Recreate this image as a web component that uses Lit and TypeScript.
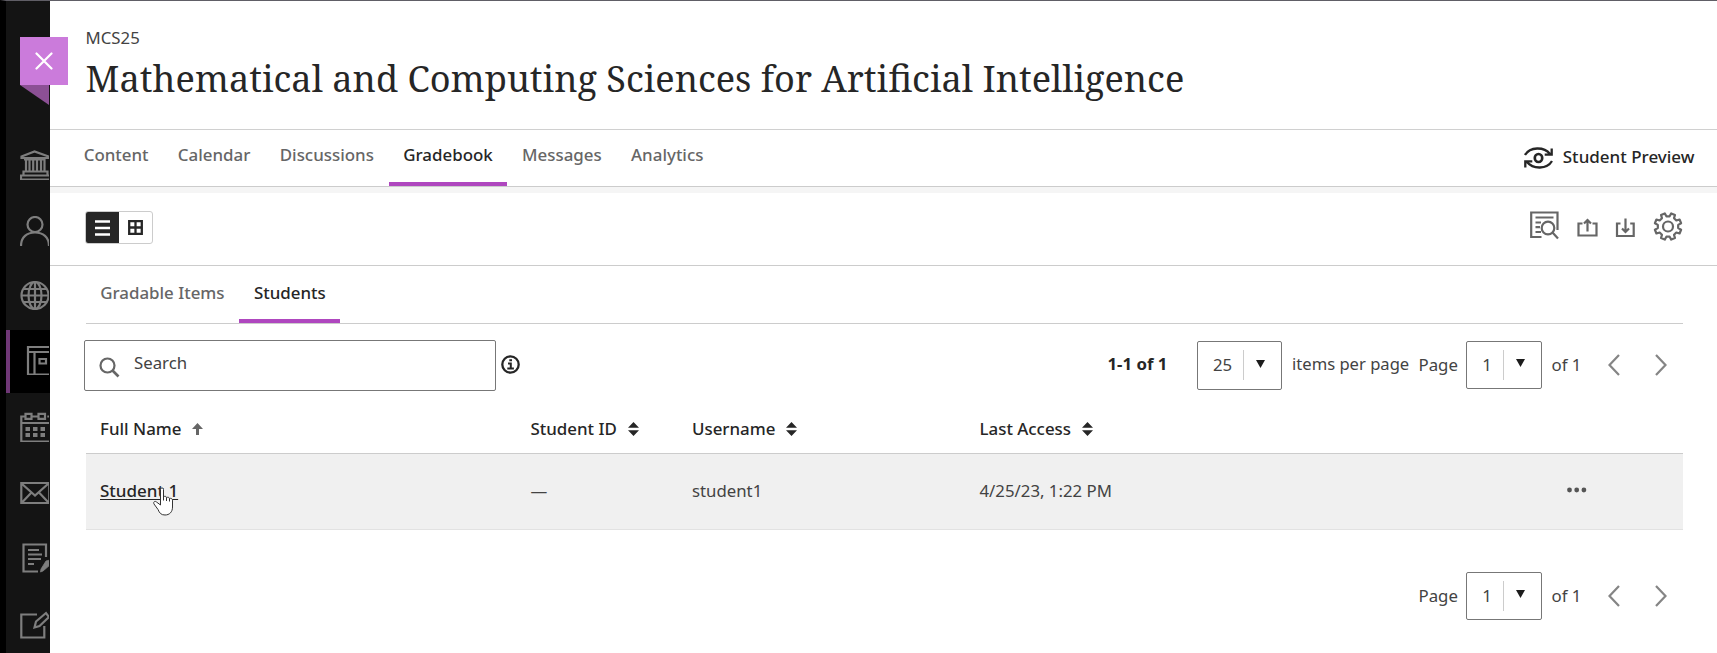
import { LitElement, html, css, svg } from "lit";
import { customElement, property } from "lit/decorators.js";

const railIcons = {
  institution: svg`<path d="M1.500 6.500 14.500 1.500 28.500 6.500V8H1.500zM6 9v12M9.500 9v12M13.200 9v12M17 9v12M21 9v12M24.500 9v12M4 9.500h21M3.500 25v-3.500h24V25M1 29.500v-4H30v4z"/>`,
  profile: svg`<circle cx="15" cy="8.500" r="7.500"/><path d="M1 30C1 21 7 16.500 15 16.500S29 21 29 30"/>`,
  globe: svg`<circle cx="15" cy="15.500" r="13.500"/><ellipse cx="15" cy="15.500" rx="6.500" ry="13.500"/><path d="M15 2v27M1.500 15.500h27M4 9h22M4 22h22"/>`,
  courses: svg`<path d="M8 2h30v27.500H8zM8 7h30M14.500 7v22M19.500 14h6.500v4.500h-6.500z"/>`,
  calendar: svg`<path d="M5.500 4.500H1.300v25h29V4.500h-3M11.500 4.500h7M1 11h28M5.500 1.800h6v5h-6zM18.500 1.800h6.500v5h-6.500z"/><path d="M5.500 17h4.500M13 17h4.500M20.500 17h4.500M5.500 23h4.500M13 23h4.500M20.500 23h4.500" stroke-width="4"/>`,
  mail: svg`<path d="M1.300 5h28v20H1.300zM1.500 5.500l13.500 12 13.500-12M2 24.500l9.500-10M28.500 24.500l-9.500-10"/>`,
  grades: svg`<path d="M26 14V1.500H3.500v27h14.500"/><path d="M8 7h11M8 11.500h14M8 16h13M8 21h6"/><path d="M26 18l4-1v5l-7 6-2.500 1 .5-3z" fill="currentColor" stroke-width=".8"/>`,
  compose: svg`<path d="M17 5.500H1.300v23h23V17M14.500 18.500l1.500-6L26 4l3 4-9.500 9z"/>`,
} as const;

/** Outline of a cog with evenly spaced teeth, none of them pointing straight up. */
const cogPath = (cx: number, cy: number, teeth: number, outer: number, inner: number) => {
  const step = (Math.PI * 2) / teeth;
  const at = (r: number, a: number) => `${(cx + r * Math.sin(a)).toFixed(2)} ${(cy - r * Math.cos(a)).toFixed(2)}`;
  const points: string[] = [];
  for (let i = 0; i < teeth; i++) {
    const a = (i + 0.5) * step;
    points.push(at(inner, a - step * 0.3), at(outer, a - step * 0.19), at(outer, a + step * 0.19), at(inner, a + step * 0.3));
  }
  return `M${points.join("L")}Z`;
};

@customElement("rail-icon")
class RailIcon extends LitElement {
  @property() name: keyof typeof railIcons = "globe";
  static styles = css`
    :host { display: block; width: 29px; height: 30px; overflow: hidden; color: #7e7e7e; }
    .glyph { display: block; width: 30px; height: 30px; fill: none; stroke: currentColor; stroke-width: 2.200; overflow: hidden; }
  `;
  render() {
    return html`<svg class="glyph" viewBox="0 0 30 30">${railIcons[this.name]}</svg>`;
  }
}

@customElement("sort-icon")
class SortIcon extends LitElement {
  static styles = css`
    :host { display: block; width: 11px; height: 14px; }
    .glyph { display: block; fill: #262626; }
  `;
  render() {
    return html`<svg class="glyph" width="11" height="14" viewBox="0 0 11 14"><path d="M5.500 0 11 5.700H0zM0 8.300h11L5.500 14z"/></svg>`;
  }
}

@customElement("page-select")
class PageSelect extends LitElement {
  @property() value = "1";
  static styles = css`
    :host { display: flex; box-sizing: border-box; width: 76px; height: 48px; border: 1px solid #777; border-radius: 2px; background: #fff; }
    :host([wide]) { width: 85px; height: 49px; }
    .value { flex: 1; text-align: center; line-height: 46px; padding-left: 4px; }
    :host([wide]) .value { padding-left: 5px; }
    .divider { width: 1px; height: 30px; margin-top: 8px; background: #ccc; }
    .arrow { width: 37px; padding-top: 17px; box-sizing: border-box; }
    .glyph { display: block; margin-left: 12px; fill: #1c1c1c; }
    :host([wide]) .arrow { padding-top: 18px; }
  `;
  render() {
    return html`<span class="value">${this.value}</span><span class="divider"></span>
      <span class="arrow"><svg class="glyph" width="9" height="8" viewBox="0 0 9 8"><path d="M0 0h9L4.500 8z"/></svg></span>`;
  }
}

@customElement("page-nav")
class PageNav extends LitElement {
  static styles = css`
    :host { display: flex; align-items: center; height: 48px; line-height: 46px; }
    .label { width: 47.500px; }
    .total { width: 65.500px; padding-left: 9.500px; box-sizing: border-box; }
    .glyph { display: block; fill: none; stroke: #858585; stroke-width: 2.200; }
    .next { margin-left: 35px; }
  `;
  render() {
    return html`<span class="label">Page</span><page-select></page-select><span class="total">of 1</span>
      <svg class="glyph" width="12" height="22" viewBox="0 0 12 22"><path d="M11 1 1.500 11 11 21"/></svg>
      <svg class="glyph next" width="12" height="22" viewBox="0 0 12 22"><path d="M1 1l9.500 10L1 21"/></svg>`;
  }
}

@customElement("app-root")
class AppRoot extends LitElement {
  static styles = css`
    :host { display: block; position: relative; width: 1717px; height: 653px; overflow: hidden; background: #fff; font-family: "Noto Sans", "Open Sans", sans-serif; font-size: 16.800px; color: #434343; }
    * { box-sizing: border-box; }
    .shell { display: flex; height: 653px; border-top: 1px solid #605e66; border-left: 6px solid #000; }
    .rail { width: 43.500px; height: 652px; background: #141414; padding-top: 134px; flex: none; overflow: hidden; }
    .rail-item { height: 65.700px; padding: 15px 0 0 14px; }
    .rail-item.globe { height: 65px; }
    .rail-item.profile { height: 64.300px; }
    .rail-item.courses { height: 63px; background: #000; border-left: 4.500px solid #6f3776; padding: 15.500px 0 0 9.500px; margin-bottom: 4px; }
    .ribbon { position: absolute; left: 20px; top: 37px; width: 48.300px; height: 48px; background: #cb7bdb; }
    .ribbon-fold { position: absolute; left: 20px; top: 85px; }
    .cross { display: block; margin: 15px 0 0 15px; }
    .main { flex: 1; }
    .header { height: 129px; padding: 24px 0 0 36px; border-bottom: 1px solid #d0d0d0; }
    .code { line-height: 26px; height: 26px; }
    .title { margin: 0; padding-top: 2px; font: 400 36.150px/50px "Noto Serif", "DejaVu Serif", serif; color: #262626; white-space: nowrap; }
    .nav { display: flex; height: 57px; border-bottom: 1px solid #ccc; box-shadow: 0 6px 0 #f5f5f5; padding-left: 19.500px; font-weight: 500; font-size: 16.920px; color: #666; }
    .nav-tab { padding: 0 14.650px; line-height: 49px; height: 56px; white-space: nowrap; }
    .nav-tab.active { border-bottom: 4px solid #af47bf; color: #262626; }
    .preview { display: flex; margin-left: auto; padding-right: 22.500px; color: #262626; line-height: 54px; font-size: 17px; }
    .preview-icon { margin: 16px 10px 0 0; }
    .toolbar { display: flex; height: 79px; padding: 23px 34px 0 35.500px; border-bottom: 1px solid #ccc; }
    .toggle { display: flex; width: 68px; height: 33px; margin-top: 1px; border: 1px solid #ccc; border-radius: 3px; overflow: hidden; }
    .view { display: grid; place-items: center; width: 33px; }
    .view.on { background: #262626; }
    .actions { margin-left: auto; display: flex; }
    .content { padding: 0 34px 0 36px; }
    .subtabs { display: flex; height: 58px; border-bottom: 1px solid #ccc; font-weight: 500; font-size: 16.900px; color: #666; }
    .subtab { padding: 0 14.700px; line-height: 54px; height: 57px; }
    .subtab.active { border-bottom: 4.500px solid #af47bf; color: #262626; }
    .filters { display: flex; height: 84px; }
    .search { display: flex; width: 412px; height: 51px; margin: 16px 0 0 -1.500px; border: 1px solid #777; border-radius: 2px; line-height: 44px; }
    .search-icon { margin: 15.500px 14px 0 14px; }
    .info { margin: 31px 0 0 5px; }
    .pager { display: flex; align-items: flex-start; margin: 16.500px 16.500px 0 auto; line-height: 46px; }
    .range { font-weight: 700; color: #262626; width: 89px; }
    .per-page { padding-left: 10.500px; width: 137px; font-size: 16.600px; }
    .row { display: grid; grid-template-columns: 430.500px 161.500px 287.500px 587.500px auto; padding-left: 14.500px; align-items: center; }
    .head { height: 46px; padding-bottom: 4px; font-weight: 500; color: #262626; border-bottom: 1px solid #ccc; font-size: 16.900px; }
    .col { display: flex; align-items: center; gap: 11px; }
    .record { height: 76px; padding-bottom: 3px; background: #f0f0f0; border-bottom: 1px solid #e2e2e2; }
    .student { color: #262626; font-size: 17px; font-weight: 500; text-decoration: underline; text-underline-offset: 2px; text-decoration-thickness: 1px; }
    .footer { display: flex; justify-content: flex-end; padding: 41.500px 16.500px 0 0; }
    .pointer { position: absolute; left: 152px; top: 487px; }
    svg { display: block; flex: none; }
    .line { fill: none; stroke: #666; stroke-width: 2.200; }
    .dark { fill: none; stroke: #262626; stroke-width: 2.300; }
  `;

  private rail: (keyof typeof railIcons)[] = ["institution", "profile", "globe", "courses", "calendar", "mail", "grades", "compose"];
  private tabs = ["Content", "Calendar", "Discussions", "Gradebook", "Messages", "Analytics"];

  render() {
    return html`
      <div class="shell">
        <div class="rail">
          ${this.rail.map((n) => html`<div class="rail-item ${n}"><rail-icon .name=${n}></rail-icon></div>`)}
        </div>
        <div class="main">
          <div class="header"><div class="code">MCS25</div><h1 class="title">Mathematical and Computing Sciences for Artificial Intelligence</h1></div>
          <div class="nav">
            ${this.tabs.map((t) => html`<div class="nav-tab ${t === "Gradebook" ? "active" : ""}">${t}</div>`)}
            <div class="preview">
              <svg class="preview-icon dark" width="29" height="24" viewBox="0 0 29 24"><path d="M1 9C6 .500 20 .500 26 8M28 15C23 23.500 9 23.500 3 16M27.700 2.500v6.200h-7M1.300 21.500v-6.200h7"/><ellipse cx="14.500" cy="12" rx="3.700" ry="4" stroke-width="2.700"/></svg>
              <span>Student Preview</span>
            </div>
          </div>
          <div class="toolbar">
            <div class="toggle">
              <div class="view on"><svg width="15" height="16" viewBox="0 0 15 16"><path d="M0 1.500h15M0 8h15M0 14.500h15" stroke="#fff" stroke-width="2.400"/></svg></div>
              <div class="view"><svg class="dark" width="15" height="15" viewBox="0 0 15 15"><path d="M1.200 1.200h12.600v12.600H1.200zM7.500 1v13M1 7.500h13"/></svg></div>
            </div>
            <div class="actions">
              <svg class="line" width="153" height="34" viewBox="0 0 153 34">
                <path d="M11.500 27H1.200V2.500H27.500V20M5.500 7.500h18M5.500 12.500H11M5.500 17.200H10M5.500 22H11"/><circle cx="18" cy="18" r="6.300"/><path d="M22.500 22.500l5.500 6"/>
                <path d="M52.500 13.500H48.500V25.500h18V13.500H62.500M57.500 21.500V10.500M54 13.500 57.500 10l3.500 3.500"/>
                <path d="M90.500 13.500h-3.500v12.500h16.700V13.500h-3.500M95.500 8.500v13M92 18.500l3.500 3.500 3.500-3.500"/>
                <circle cx="138" cy="16.500" r="5"/>
                <path stroke-linejoin="round" d=${cogPath(138, 16.500, 8, 13.500, 10.300)}/>
              </svg>
            </div>
          </div>
          <div class="content">
            <div class="subtabs"><div class="subtab">Gradable Items</div><div class="subtab active">Students</div></div>
            <div class="filters">
              <div class="search"><svg class="search-icon line" width="21" height="21" viewBox="0 0 21 21"><circle cx="8.500" cy="8.500" r="7"/><path d="M13.500 13.500l6 6" stroke-width="2.700"/></svg>Search</div>
              <svg class="info dark" width="19" height="19" viewBox="0 0 19 19"><circle cx="9.500" cy="9.500" r="8.200"/><path d="M7 8.500h2.800v5M6.300 13.500h6.600M8.300 5.300h2.700" stroke-width="2"/></svg>
              <div class="pager"><span class="range">1-1 of 1</span><page-select wide value="25"></page-select><span class="per-page">items per page</span><page-nav></page-nav></div>
            </div>
            <div class="row head">
              <div class="col">Full Name <svg width="11" height="12" viewBox="0 0 11 12"><path d="M5.500 0 11 6H7V12H4V6H0z" fill="#666"/></svg></div>
              <div class="col">Student ID <sort-icon></sort-icon></div>
              <div class="col">Username <sort-icon></sort-icon></div>
              <div class="col">Last Access <sort-icon></sort-icon></div>
            </div>
            <div class="row record">
              <div><span class="student">Student 1</span></div><div>—</div><div>student1</div><div>4/25/23, 1:22 PM</div>
              <svg width="20" height="6" viewBox="0 0 20 6" fill="#555"><circle cx="2.500" cy="3" r="2.400"/><circle cx="9.700" cy="3" r="2.400"/><circle cx="16.900" cy="3" r="2.400"/></svg>
            </div>
            <div class="footer"><page-nav></page-nav></div>
          </div>
        </div>
      </div>
      <svg class="ribbon-fold" width="29" height="20" viewBox="0 0 29 20"><path d="M0 0h29v20z" fill="#8c5095"/></svg>
      <div class="ribbon"><svg class="cross" width="18" height="18" viewBox="0 0 18 18"><path d="M1.500 1.500l15 15M16.500 1.500l-15 15" stroke="#fff" stroke-width="2.200" stroke-linecap="round"/></svg></div>
      <svg class="pointer" width="24" height="29" viewBox="0 0 24 29"><path d="M8.500 2.500C8.500 .500 11.500 .500 11.500 2.500V10c1-1.200 3-.8 3 .8 1-1 3-.6 3 1 1-1 3-.3 3 1.300V20c0 5-3 8-7.500 8-4 0-5.500-2-7-5.500L2 17c-1-2 .8-3.500 2.500-2L8.500 18z" fill="#fff" stroke="#333" stroke-width="1"/><path d="M11.500 10v3.500M14.500 11v3M17.500 12v2.500" stroke="#333" fill="none"/></svg>
    `;
  }
}
